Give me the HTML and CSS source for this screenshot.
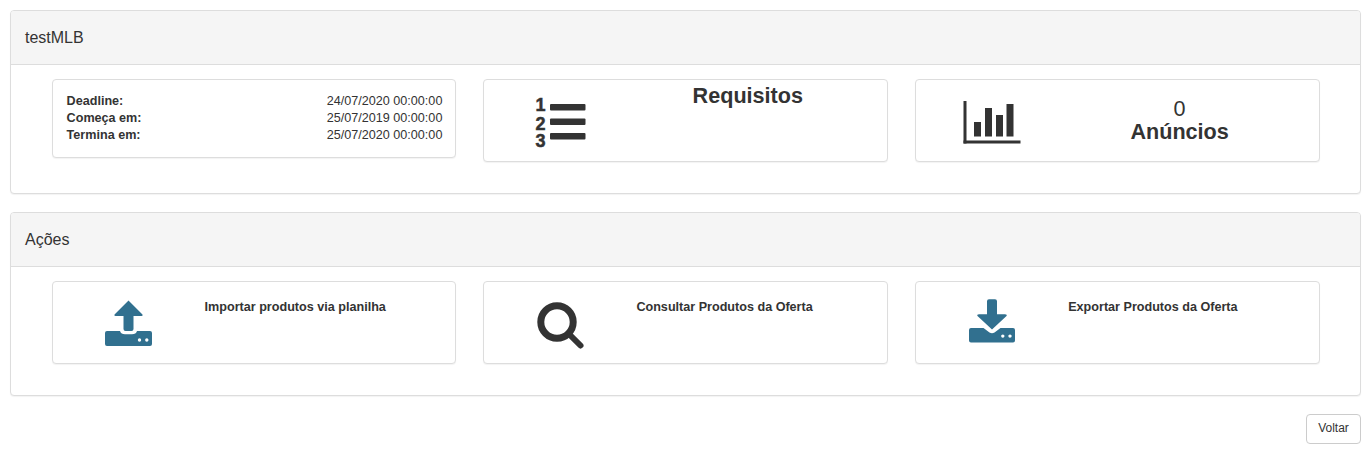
FILE: index.html
```html
<!DOCTYPE html>
<html lang="pt-BR">
<head>
    <meta charset="UTF-8">
    <meta name="viewport" content="width=device-width, initial-scale=1.0">
    <title>testMLB</title>
    <link rel="stylesheet" href="styles.css">
</head>
<body>
    <div class="panel">
        <div class="panel-heading">testMLB</div>
        <div class="panel-body">
            <div class="card dates">
                <div class="date-row"><strong>Deadline:</strong><span>24/07/2020 00:00:00</span></div>
                <div class="date-row"><strong>Começa em:</strong><span>25/07/2019 00:00:00</span></div>
                <div class="date-row"><strong>Termina em:</strong><span>25/07/2020 00:00:00</span></div>
            </div>

            <div class="card media-card">
                <div class="card-media">
                    <svg class="icon dark" viewBox="531 94 60 60">
                        <text class="icon-num" x="535.5" y="111">1</text>
                        <text class="icon-num" x="535.5" y="129.5">2</text>
                        <text class="icon-num" x="535.5" y="147">3</text>
                        <rect x="550" y="104" width="35.5" height="6.5" rx="1"/>
                        <rect x="550" y="118.5" width="35.5" height="6.5" rx="1"/>
                        <rect x="550" y="133" width="35.5" height="6.5" rx="1"/>
                    </svg>
                </div>
                <div class="card-stat stat-top">Requisitos</div>
            </div>

            <div class="card media-card">
                <div class="card-media">
                    <svg class="icon dark" viewBox="963 94 60 60">
                        <rect x="963.5" y="101" width="3" height="42.5"/>
                        <rect x="963.5" y="140.5" width="57" height="3"/>
                        <rect x="974" y="122" width="7" height="14.5"/>
                        <rect x="985" y="108" width="7" height="28.5"/>
                        <rect x="996" y="115" width="7" height="21.5"/>
                        <rect x="1006.5" y="104" width="7" height="32.5"/>
                    </svg>
                </div>
                <div class="card-stat stat-count"><span class="count">0</span><br>Anúncios</div>
            </div>
        </div>
    </div>

    <div class="panel">
        <div class="panel-heading">Ações</div>
        <div class="panel-body">
            <div class="card media-card">
                <div class="card-media">
                    <svg class="icon info" viewBox="100 296 60 60">
                        <path d="M128.500 300.500 L142.500 314.500 Q143 316 141.500 316 H133.500 V329 Q133.500 331 131.500 331 H125.500 Q123.500 331 123.500 329 V316 H115.500 Q114 316 114.500 314.500 Z"/>
                        <path fill-rule="evenodd" d="M107 331 H120 Q121 334.300 125 334.300 H132 Q136 334.300 137 331 H150 Q152 331 152 333 V344 Q152 346 150 346 H107 Q105 346 105 344 V333 Q105 331 107 331 Z M139.500 338.300 A1.700 1.700 0 1 0 139.500 341.700 A1.700 1.700 0 1 0 139.500 338.300 Z M146.800 338.300 A1.700 1.700 0 1 0 146.800 341.700 A1.700 1.700 0 1 0 146.800 338.300 Z"/>
                    </svg>
                </div>
                <div class="card-label">Importar produtos via planilha</div>
            </div>

            <div class="card media-card">
                <div class="card-media">
                    <svg class="icon dark" viewBox="531 296 60 60">
                        <circle class="lens" cx="557" cy="322" r="16.200"/>
                        <line class="lens-handle" x1="570" y1="335" x2="580.500" y2="345.500"/>
                    </svg>
                </div>
                <div class="card-label">Consultar Produtos da Oferta</div>
            </div>

            <div class="card media-card">
                <div class="card-media">
                    <svg class="icon info" viewBox="963 296 60 60">
                        <path d="M989 299.300 H995 Q997 299.300 997 301.300 V314.300 H1005 Q1007.500 314.300 1006.500 316 L992 329.500 L977.500 316 Q976.500 314.300 979 314.300 H987 V301.300 Q987 299.300 989 299.300 Z"/>
                        <path fill-rule="evenodd" d="M971 328 H983.500 L989.500 332.500 Q992 334 994.500 332.500 L1000.500 328 H1013 Q1015 328 1015 330 V340.500 Q1015 342.500 1013 342.500 H971 Q969 342.500 969 340.500 V330 Q969 328 971 328 Z M1002.800 334.400 A1.700 1.700 0 1 0 1002.800 337.800 A1.700 1.700 0 1 0 1002.800 334.400 Z M1010 334.400 A1.700 1.700 0 1 0 1010 337.800 A1.700 1.700 0 1 0 1010 334.400 Z"/>
                    </svg>
                </div>
                <div class="card-label">Exportar Produtos da Oferta</div>
            </div>
        </div>
    </div>

    <div class="actions">
        <button class="btn">Voltar</button>
    </div>
</body>
</html>
```

FILE: styles.css
```css
body {
    margin: 0; padding: 10px 11px 10px 10px;
    font-family: "Liberation Sans", Arial, sans-serif;
    color: #333; background: #fff;
}
.panel {
    background: #fff; border: 1px solid #ddd; border-radius: 4px;
    box-shadow: 0 1px 1px rgba(0,0,0,0.05); margin-bottom: 18px;
}
.panel-heading {
    background: #f5f5f5; border-bottom: 1px solid #ddd;
    border-radius: 3px 3px 0 0;
    padding: 0 14px; height: 53px; line-height: 54px; font-size: 16px;
}
.panel-body {
    display: grid; grid-template-columns: repeat(3, 1fr); gap: 27px;
    align-items: start;
    padding: 14px 40px 31px 40.6px;
}
.card {
    background: #fff; border: 1px solid #ddd; border-radius: 4px;
    box-shadow: 0 1px 1px rgba(0,0,0,0.05);
}
.dates { padding: 13px 13px 13px 14px; font-size: 12.6px; line-height: 17px; }
.date-row { display: flex; justify-content: space-between; }
.media-card { display: flex; height: 81px; }
.card-media { width: 77px; padding: 14px 0 0 47px; flex-shrink: 0; }
.icon { display: block; width: 60px; height: 60px; }
.dark { fill: #333; }
.info { fill: #31708f; }
.icon-num { font-family: "Liberation Sans", sans-serif; font-weight: bold; font-size: 18px; stroke: #333; stroke-width: 0.5px; }
.lens { fill: none; stroke: #333; stroke-width: 7px; }
.lens-handle { stroke: #333; stroke-width: 6px; stroke-linecap: round; }
.card-stat {
    flex: 1; text-align: center; font-size: 21.6px; font-weight: bold; line-height: 23px;
}
.stat-top { padding-top: 4px; }
.stat-count { padding-top: 17px; }
.count { font-weight: normal; }
.card-label {
    flex: 1; padding: 17px 0 0 28px;
    font-size: 12.6px; font-weight: bold; line-height: 17px;
}
.actions { display: flex; justify-content: flex-end; }
.btn {
    background: #fff; border: 1px solid #ccc; border-radius: 4px;
    color: #333; font-family: inherit; font-size: 12px;
    width: 55px; height: 30px; padding: 0 0 2px;
}
```
